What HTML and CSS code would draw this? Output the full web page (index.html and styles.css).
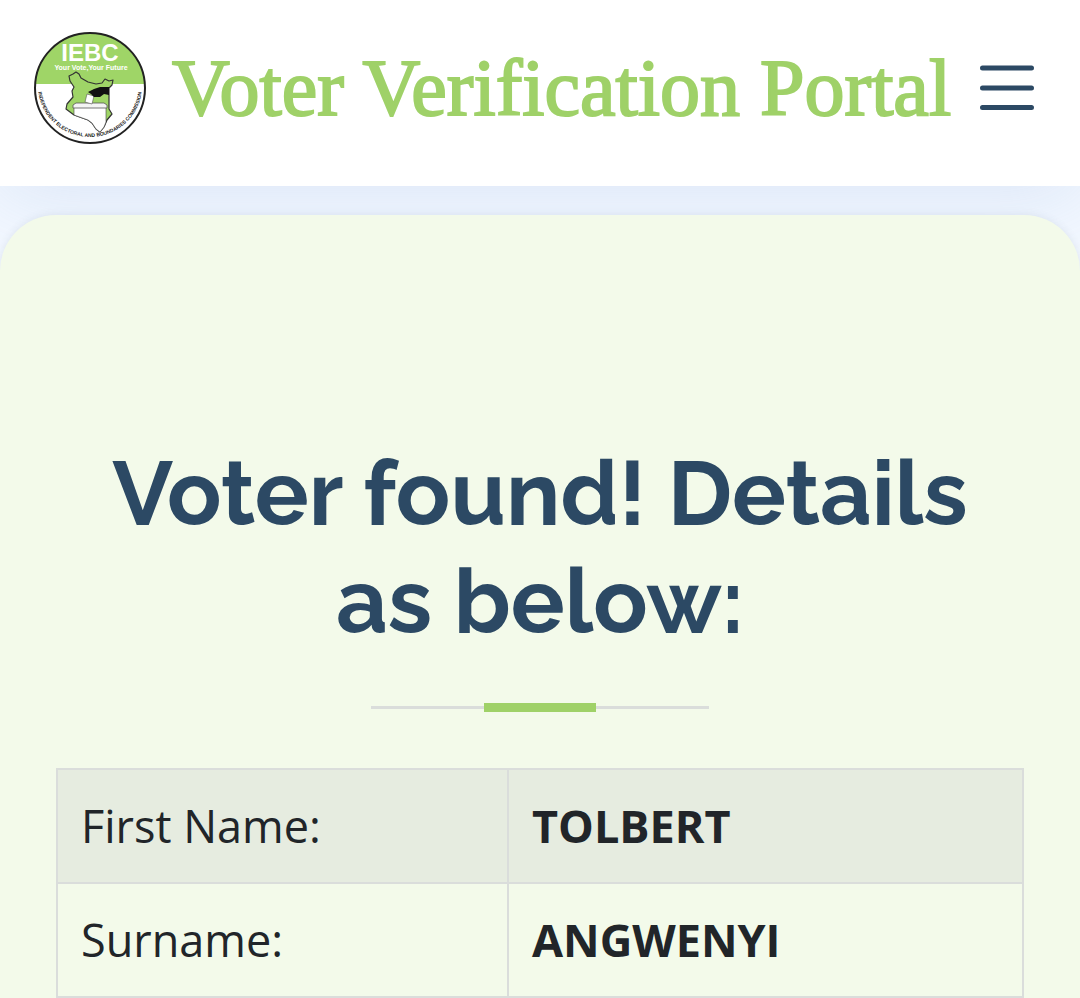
FILE: index.html
```html
<!DOCTYPE html>
<html lang="en">
<head>
    <meta charset="UTF-8">
    <meta name="viewport" content="width=device-width, initial-scale=1.0">
    <title>Voter Verification Portal</title>
    <link rel="stylesheet" href="styles.css">
</head>
<body>

<header class="header">
    <a href="#" class="brand">
        <svg class="logo" viewBox="0 0 112 112" aria-hidden="true">
            <defs>
                <clipPath id="disc"><circle cx="56" cy="56" r="55"/></clipPath>
                <path id="rim" d="M4 54 A52 51 0 0 0 108 54"/>
            </defs>
            <circle cx="56" cy="56" r="55" fill="#fff"/>
            <rect width="112" height="52" fill="#9fd567" clip-path="url(#disc)"/>
            <circle cx="56" cy="56" r="55" fill="none" stroke="#222" stroke-width="2"/>
            <text x="56" y="29" class="logo-name">IEBC</text>
            <text x="57" y="38" class="logo-motto">Your Vote,Your Future</text>
            <path d="M35 44 L39 42 L42 40 L45 42 L47 46 L54 50 L62 52 L68 51 L71 47 L75 49 L79 48 L78 53 L75 56 L75 77 L78 82 L73 88 L70 95 L66 100 L62 97 L58 91 L54 88 L40 83 L32 77 L33 72 L39 65 L38 59 L40 55 L36 49 Z" fill="#9fd567" stroke="#333" stroke-width="1.2" stroke-linejoin="round"/>
            <path d="M40 75 H72 V90 L70 95 L66 100 L62 97 L58 91 L54 88 L40 83 Z" fill="#fff" stroke="#444" stroke-width="0.6"/>
            <path d="M39 73 L42 71 H70 L73 73 V76 H39 Z" fill="#f4f4f4" stroke="#555" stroke-width="0.8"/>
            <path d="M53 62 L60 64 L58 72 L51 70 Z" fill="#fff" stroke="#555" stroke-width="0.6"/>
            <path d="M57 62 L54 60 L60 57 L66 55 L75 55 V63 L70 62 L66 65 L60 65 Z" fill="#111"/>
            <text class="logo-rim"><textPath href="#rim" startOffset="50%">INDEPENDENT ELECTORAL AND BOUNDARIES COMMISSION</textPath></text>
        </svg>
        <span class="title">Voter Verification Portal</span>
    </a>
    <button class="menu" aria-label="Menu">
        <svg viewBox="0 0 54 46" aria-hidden="true">
            <path d="M2.5 3 H51.5 M2.5 23 H51.5 M2.5 42.5 H51.5"/>
        </svg>
    </button>
</header>

<main class="details">
    <h2>Voter found! Details as below:</h2>
    <div class="divider"></div>
    <table>
        <tbody>
            <tr>
                <th scope="row">First Name:</th>
                <td>TOLBERT</td>
            </tr>
            <tr>
                <th scope="row">Surname:</th>
                <td>ANGWENYI</td>
            </tr>
        </tbody>
    </table>
</main>

</body>
</html>
```

FILE: styles.css
```css
* {
    box-sizing: border-box;
}
body {
    margin: 0;
    font-family: "Open Sans", sans-serif;
    font-size: 45px;
    line-height: 68px;
    color: #212529;
    background-color: #f2f7ff;
}
.header {
    display: flex;
    justify-content: space-between;
    align-items: center;
    padding: 32px 46px 42px 34px;
    background: #fff;
    box-shadow: 0 6px 80px rgba(120, 160, 210, 0.2);
}
.brand {
    display: flex;
    align-items: center;
    gap: 26px;
    color: #9fd168;
    text-decoration: none;
}
.logo {
    width: 112px;
    height: 112px;
    flex-shrink: 0;
}
.logo-name {
    font: bold 24px "Liberation Sans", sans-serif;
    fill: #fff;
    text-anchor: middle;
}
.logo-motto {
    font: bold 7px "Liberation Sans", sans-serif;
    fill: #fff;
    text-anchor: middle;
}
.logo-rim {
    font: bold 5px "Liberation Sans", sans-serif;
    fill: #222;
    text-anchor: middle;
}
.title {
    font-family: "Liberation Serif", serif;
    font-size: 80px;
    line-height: 112px;
    white-space: nowrap;
    -webkit-text-stroke: 2px #9fd168;
}
.menu {
    flex: 0 0 54px;
    padding: 0;
    border: none;
    background: none;
    cursor: pointer;
}
.menu svg {
    display: block;
    width: 100%;
    fill: none;
    stroke: #2c4964;
    stroke-width: 5;
    stroke-linecap: round;
}
.details {
    position: relative;
    margin-top: 29px;
    padding: 224px 56px 56px;
    background: #f3faea;
    border-radius: 56px 56px 0 0;
    box-shadow: 0 0 8px rgba(60, 80, 110, 0.1);
}
h2 {
    margin: 0;
    padding: 0 24px;
    font-family: Raleway, Lato, sans-serif;
    font-size: 90px;
    font-weight: bold;
    line-height: 108px;
    text-align: center;
    color: #2c4964;
}
.divider {
    width: 338px;
    height: 9px;
    margin: 48px auto 56px;
    background:
        linear-gradient(#9fd168, #9fd168) center / 112px 9px no-repeat,
        linear-gradient(#dadddb, #dadddb) center / 100% 3px no-repeat;
}
table {
    width: 100%;
    border-collapse: collapse;
}
th, td {
    padding: 22px 23px;
    border: 2px solid #dadddb;
    text-align: left;
}
th {
    width: 451px;
    font-weight: normal;
}
td {
    font-weight: bold;
}
tr:nth-child(odd) {
    background: #e6ece0;
}
```
